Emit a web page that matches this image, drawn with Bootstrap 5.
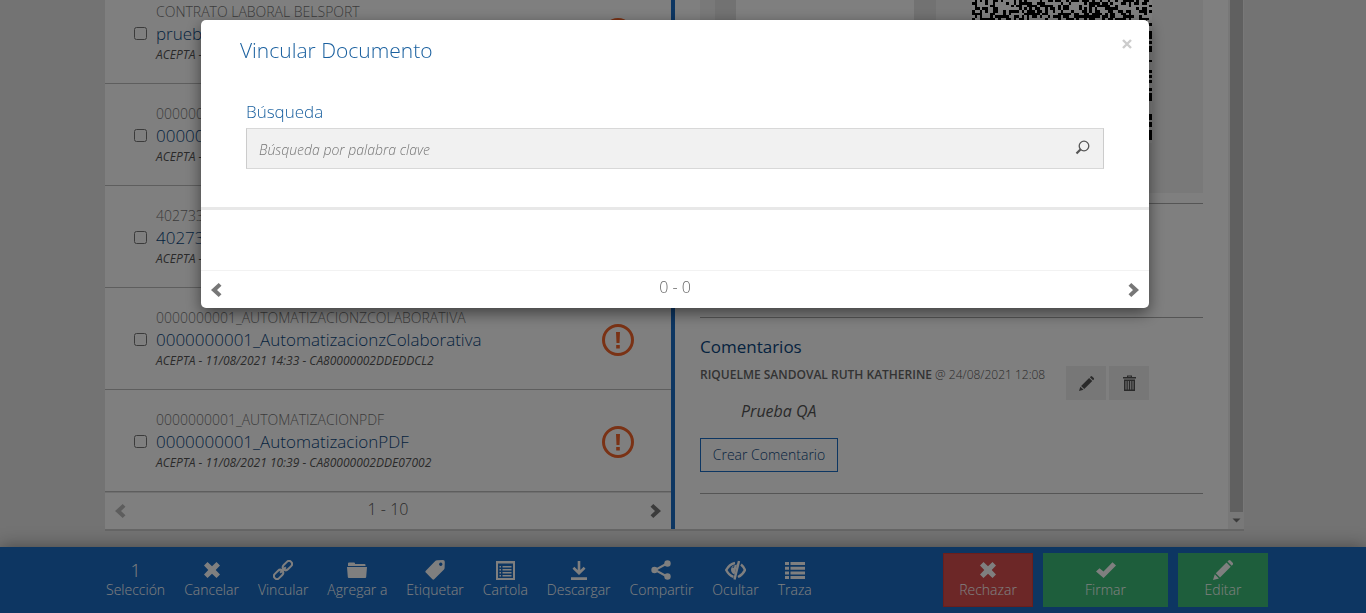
<!DOCTYPE html>
<html lang="es">
<head>
<meta charset="utf-8">
<meta name="viewport" content="width=device-width, initial-scale=1">
<title>Vincular Documento</title>
<link href="https://cdn.jsdelivr.net/npm/bootstrap@5.3.0/dist/css/bootstrap.min.css" rel="stylesheet">
<style>
:root{--brand:#1a6cc4;--ink-blue:#0b4680}
body{font-family:"Open Sans",sans-serif;font-weight:300;font-size:14px;line-height:20px;color:#555;background:#e6e6e6;height:100vh;overflow:hidden}
svg{display:block;fill:currentColor}
.desk{width:1139px;max-width:100%;box-shadow:0 2px 0 #ccc}
.desk-wrap{padding:0 17px 18px 0}
.inbox{width:570px;border-right:4px solid var(--brand)}
.stack{min-height:0}
.doc{height:102px;border-bottom:1px solid #bdbdbd;padding:2px 37px 0 29px;flex:none}
.doc input{width:13px;height:13px;margin:0 9px 0 0;accent-color:var(--brand)}
.doc-text{padding-bottom:2px}
.doc-kind{color:#777;line-height:20px}
.doc-name{font-size:17px;line-height:24px;color:var(--ink-blue);text-decoration:none}
.doc-meta{font-size:12px;line-height:18px;font-style:italic;font-weight:400;color:#555}
.alert-mark{color:#f4642a}
.pager{height:38px;font-size:16px;border-top:1px solid #e0e0e0}
.pager button{border:0;background:none;padding:0 9px;color:#777}
.pager button:disabled{color:#bbb}
.detail{padding:0 25px}
.files{background:#f2f2f2;height:238px;flex:none;padding-left:15px}
.viewer{width:221px;background:#e4e4e4;padding:0 22px 0 21px}
.sheet{background:#fff;height:100%}
.qr-box{padding:8px 36px}
.qr-box svg{background:#fff;color:#000}
.rule{height:1px;background:#aaa;flex:none}
.files-rule{margin-top:10px}
.folded{height:113px}
.detail-end{height:35px}
.notes-title{font-size:17px;line-height:24px;font-weight:400;color:var(--ink-blue);margin:17px 0 6px}
.author{font-size:12px;font-weight:300}
.author strong{font-weight:600;color:#666}
.note{font-size:16px;line-height:22px;font-style:italic;font-weight:400;padding:15px 0 0 41px}
.note-tools{gap:3px;margin-right:54px;padding-top:1px}
.btn-tool{width:40px;height:34px;background:#eee;border:0;border-radius:0;color:#555;padding:0}
.btn-note{width:138px;height:34px;border:1px solid var(--brand);border-radius:0;color:var(--ink-blue);font-size:14px;font-weight:300;padding:0 0 2px;margin:16px 0 21px}
.track{width:16px;background:#f1f1f1}
.thumb{background:#c1c1c1;margin:0 1px 0 2px}
.actions{height:66px;background:var(--brand);color:#fff;box-shadow:0 0 17px rgba(0,0,0,.4);flex:none}
.actions-in{width:1170px;max-width:100%;padding-left:8px}
.act{border:0;background:none;color:#fff;padding:0;font-size:14px;line-height:20px;font-weight:300}
.act-icon{height:20px;display:flex;align-items:center;justify-content:center}
.act-count{font-size:18px}
.tools{gap:19px}
.boxes{gap:10px}
.act-box{width:90px;height:54px}
.act-wide{width:125px}
.act-no{background:#d84f4f;border:1px solid #d43f3a}
.act-yes{background:#3cbd78}
.modal{padding-right:16px}
.modal-dialog{max-width:948px;margin:20px auto}
.modal-content{border:0;border-radius:5px;box-shadow:0 5px 15px rgba(0,0,0,.5);color:#666}
.modal-header{padding:16px 16px 0 39px;border:0;align-items:flex-start}
.modal-title{font-size:21px;line-height:29px;font-weight:300;color:#1a609f}
.x{border:0;background:none;padding:0;width:12px;height:16px;color:#ccc}
.modal-body{padding:35px 45px 38px;border-bottom:3px solid #e8e8e8}
.search-label{font-size:17px;line-height:24px;color:#1a609f;margin-bottom:4px}
.search-row{background:#f1f1f1;border:1px solid #ccc;border-color:#d8d8d8 #ccc;height:41px}
.search-row input{border:0;background:none;font-size:14px;font-weight:300;font-style:italic;outline:0;padding:2px 12px 0}
.search-row input::placeholder{color:#777;opacity:1}
.search-row button{border:0;background:none;color:#555;padding:0 13px 2px}
.results{height:60px}
.modal .pager{border-top:1px solid #f2f2f2}
.nudge{padding-bottom:5px}
</style>
</head>
<body class="d-flex flex-column">

<svg class="d-none">
  <symbol id="left" viewBox="0 0 12 16"><path d="M8.7 1 11.5 3.8 7 8l4.500 4.200L8.700 15 1 8z"/></symbol>
  <symbol id="right" viewBox="0 0 12 16"><path d="M3.300 1 .5 3.800 5 8 .5 12.200 3.300 15 11 8z"/></symbol>
  <symbol id="cross" viewBox="0 0 18 18"><path d="M4.500 1 9 5.300 13.500 1 17 4.500 12.700 9 17 13.500 13.500 17 9 12.700 4.500 17 1 13.500 5.300 9 1 4.500z"/></symbol>
  <symbol id="pencil" viewBox="0 0 20 20"><path d="m0 20 1.800-5.800 4.200 4.200zM2.800 13.200 13.500 2.500l4.200 4.200L7 17.400zM14.500 1.500 15.500.5q1-1 2 0l2.200 2.200q1 1 0 2l-1 1z"/></symbol>
  <symbol id="alert" viewBox="0 0 32 32"><circle cx="16" cy="16" r="14.500" fill="none" stroke="currentColor" stroke-width="3"/><path d="M14 8h4l-.5 11h-3zM14.200 21h3.600v3.500h-3.600z"/></symbol>
</svg>

<main class="desk-wrap flex-grow-1 d-flex justify-content-center stack">
  <div class="desk bg-white d-flex">
    <section class="inbox d-flex flex-column flex-shrink-0">
      <div class="stack flex-grow-1 overflow-hidden d-flex flex-column justify-content-end">
        <article class="doc d-flex align-items-center"><input type="checkbox" id="d1"><div class="doc-text flex-grow-1"><div class="doc-kind">CONTRATO LABORAL BELSPORT</div><label for="d1" class="doc-name d-block">prueb</label><div class="doc-meta">ACEPTA -</div></div><svg class="alert-mark" width="32" height="32"><use href="#alert"/></svg></article>
        <article class="doc d-flex align-items-center"><input type="checkbox" id="d2"><div class="doc-text flex-grow-1"><div class="doc-kind">000000</div><label for="d2" class="doc-name d-block">00000</label><div class="doc-meta">ACEPTA -</div></div></article>
        <article class="doc d-flex align-items-center"><input type="checkbox" id="d3"><div class="doc-text flex-grow-1"><div class="doc-kind">402733</div><label for="d3" class="doc-name d-block">40273</label><div class="doc-meta">ACEPTA -</div></div></article>
        <article class="doc d-flex align-items-center"><input type="checkbox" id="d4"><div class="doc-text flex-grow-1"><div class="doc-kind">0000000001_AUTOMATIZACIONZCOLABORATIVA</div><label for="d4" class="doc-name d-block">0000000001_AutomatizacionzColaborativa</label><div class="doc-meta">ACEPTA - 11/08/2021 14:33 - CA80000002DDEDDCL2</div></div><svg class="alert-mark" width="32" height="32"><use href="#alert"/></svg></article>
        <article class="doc d-flex align-items-center"><input type="checkbox" id="d5"><div class="doc-text flex-grow-1"><div class="doc-kind">0000000001_AUTOMATIZACIONPDF</div><label for="d5" class="doc-name d-block">0000000001_AutomatizacionPDF</label><div class="doc-meta">ACEPTA - 11/08/2021 10:39 - CA80000002DDE07002</div></div><svg class="alert-mark" width="32" height="32"><use href="#alert"/></svg></article>
      </div>
      <div class="pager d-flex align-items-center justify-content-between">
        <button type="button" disabled aria-label="Anterior"><svg width="12" height="16"><use href="#left"/></svg></button>
        <span class="nudge">1 - 10</span>
        <button type="button" aria-label="Siguiente"><svg width="12" height="16"><use href="#right"/></svg></button>
      </div>
    </section>

    <section class="detail stack flex-grow-1 d-flex flex-column justify-content-end overflow-hidden">
      <div class="files d-flex">
        <div class="viewer"><div class="sheet"></div></div>
        <div class="qr-box"><svg id="qr" width="180" height="180" viewBox="0 0 69 69" shape-rendering="crispEdges" role="img" aria-label="Código"><path/></svg></div>
      </div>
      <div class="rule files-rule"></div>
      <div class="folded flex-shrink-0"></div>
      <div class="rule"></div>
      <h2 class="notes-title">Comentarios</h2>
      <div class="d-flex">
        <div>
          <div class="author"><strong>RIQUELME SANDOVAL RUTH KATHERINE</strong> @ 24/08/2021 12:08</div>
          <div class="note">Prueba QA</div>
        </div>
        <div class="note-tools d-flex ms-auto">
          <button type="button" class="btn btn-tool d-flex align-items-center justify-content-center" aria-label="Editar comentario"><svg width="15" height="15"><use href="#pencil"/></svg></button>
          <button type="button" class="btn btn-tool d-flex align-items-center justify-content-center" aria-label="Borrar comentario"><svg width="13" height="16" viewBox="0 0 13 16"><path fill-rule="evenodd" d="M4 2V.500h5V2h4v1.500H0V2zM5.200 2h2.600v-.500H5.200zM1 4.500h11V16H1zM2.500 6v8.500h1V6zm2.300 0v8.500h1V6zm2.400 0v8.500h1V6zm2.300 0v8.500h1V6z"/></svg></button>
        </div>
      </div>
      <div><button type="button" class="btn btn-note">Crear Comentario</button></div>
      <div class="rule"></div>
      <div class="detail-end flex-shrink-0"></div>
    </section>

    <div class="track d-flex flex-column flex-shrink-0">
      <div class="thumb flex-grow-1"></div>
      <svg width="16" height="17" viewBox="0 0 16 17"><path fill="#777" d="M4.500 6.500h8l-4 4z"/></svg>
    </div>
  </div>
</main>

<footer class="actions d-flex justify-content-center">
  <div class="actions-in d-flex align-items-center justify-content-between">
    <div class="tools d-flex">
      <button type="button" class="act"><span class="act-icon act-count">1</span>Selección</button>
      <button type="button" class="act"><span class="act-icon"><svg width="18" height="18"><use href="#cross"/></svg></span>Cancelar</button>
      <button type="button" class="act"><span class="act-icon"><svg width="20" height="20" viewBox="0 0 20 20"><g transform="rotate(-45 10 10)" fill="none" stroke="currentColor" stroke-width="2"><rect x="-1.500" y="7" width="10.500" height="6" rx="3"/><rect x="11" y="7" width="10.500" height="6" rx="3"/><path d="M6 10h8"/></g></svg></span>Vincular</button>
      <button type="button" class="act"><span class="act-icon"><svg width="20" height="16" viewBox="0 0 20 16"><path d="M1 4V1.500Q1 .5 2 .5h5q1 0 1 1V2h9.500q1 0 1 1v1zM0 5h20l-.8 10q-.1 1-1 1H1.800q-.9 0-1-1z"/></svg></span>Agregar a</button>
      <button type="button" class="act"><span class="act-icon"><svg width="20" height="20" viewBox="0 0 20 20"><path fill-rule="evenodd" d="M10.500.8Q11 .3 12 .3L18 .1q1.800 0 1.800 1.800l-.2 6q0 .9-.6 1.500L9.200 19.200q-.9.900-1.800 0L.8 12.600q-.9-.9 0-1.800zM15.700 2.500a1.700 1.700 0 1 0 .1 0z"/></svg></span>Etiquetar</button>
      <button type="button" class="act"><span class="act-icon"><svg width="19" height="19" viewBox="0 0 19 19"><path fill-rule="evenodd" d="M0 0h19v19H0zM2 2.500V17h15V2.500zM3.500 5H5v1.500H3.500zM6.500 5h9v1.500h-9zM3.500 8H5v1.500H3.500zM6.500 8h9v1.500h-9zM3.500 11H5v1.500H3.500zM6.500 11h9v1.500h-9zM3.500 14H5v1.500H3.500zM6.500 14h9v1.500h-9z"/></svg></span>Cartola</button>
      <button type="button" class="act"><span class="act-icon"><svg width="16" height="19" viewBox="0 0 16 19"><path d="M6.700 0h2.600v9l3.400-3.200L14.500 7.700 8 14 1.500 7.700 3.300 5.800 6.700 9zM0 16.300h16V19H0z"/></svg></span>Descargar</button>
      <button type="button" class="act"><span class="act-icon"><svg width="20" height="20" viewBox="0 0 20 20"><path d="M16 3.500 4 10l12 6.500" fill="none" stroke="currentColor" stroke-width="2"/><circle cx="16.500" cy="3.500" r="3.200"/><circle cx="3.500" cy="10" r="3.200"/><circle cx="16.500" cy="16.500" r="3.200"/></svg></span>Compartir</button>
      <button type="button" class="act"><span class="act-icon"><svg width="21" height="20" viewBox="0 0 21 20"><path d="M10 3Q4.500 4 1.200 10 4 15.500 8.500 16.800M16 4.500q2.500 2 4 5.500-2.500 5-7 7M14 1 9.500 19.500" fill="none" stroke="currentColor" stroke-width="2.400"/><path d="M12 4.500 9.500 14.500Q6 13 6 9.500q0-4 6-5z"/><path d="M8 8q0-1.500 1.500-2" fill="none" stroke="#1a6cc4"/></svg></span>Ocultar</button>
      <button type="button" class="act"><span class="act-icon"><svg width="20" height="17" viewBox="0 0 20 17"><path d="M0 0h4v3H0zM5.500 0H20v3H5.500zM0 4.700h4v3H0zM5.500 4.700H20v3H5.500zM0 9.400h4v3H0zM5.500 9.400H20v3H5.500zM0 14h4v3H0zM5.500 14H20v3H5.500z"/></svg></span>Traza</button>
    </div>
    <div class="boxes d-flex">
      <button type="button" class="act act-box act-no"><span class="act-icon"><svg width="18" height="18"><use href="#cross"/></svg></span>Rechazar</button>
      <button type="button" class="act act-box act-wide act-yes"><span class="act-icon"><svg width="20" height="16" viewBox="0 0 20 16"><path d="m0 9.500 3.500-3.200 4 3.300L16.500.300 20 3.500 7.600 16z"/></svg></span>Firmar</button>
      <button type="button" class="act act-box act-yes"><span class="act-icon"><svg width="20" height="20"><use href="#pencil"/></svg></span>Editar</button>
    </div>
  </div>
</footer>

<div class="modal-backdrop show"></div>
<div class="modal d-block" role="dialog" aria-labelledby="t">
  <div class="modal-dialog">
    <div class="modal-content">
      <div class="modal-header">
        <h1 class="modal-title" id="t">Vincular Documento</h1>
        <button type="button" class="x" aria-label="Cerrar"><svg width="12" height="16" viewBox="0 0 12 16"><path d="m2 4 8 8M10 4l-8 8" stroke="currentColor" stroke-width="2.400"/></svg></button>
      </div>
      <div class="modal-body">
        <label class="search-label d-block" for="q">Búsqueda</label>
        <div class="search-row d-flex align-items-stretch">
          <input class="flex-grow-1" id="q" type="text" placeholder="Búsqueda por palabra clave">
          <button type="button" aria-label="Buscar"><svg width="15" height="15" viewBox="0 0 15 15"><circle cx="9" cy="6" r="4.800" fill="none" stroke="currentColor" stroke-width="1.300"/><path d="M5.700 9.300 1.500 13.500" stroke="currentColor" stroke-width="2.200"/></svg></button>
        </div>
      </div>
      <div class="results"></div>
      <div class="pager d-flex align-items-center justify-content-between">
        <button type="button" aria-label="Anterior"><svg width="12" height="16"><use href="#left"/></svg></button>
        <span class="nudge">0 - 0</span>
        <button type="button" aria-label="Siguiente"><svg width="12" height="16"><use href="#right"/></svg></button>
      </div>
    </div>
  </div>
</div>

<script src="https://cdn.jsdelivr.net/npm/bootstrap@5.3.0/dist/js/bootstrap.bundle.min.js"></script>
<script>
// fills the code symbol with its dark modules
let seed = 7, d = '';
for (let y = 0; y < 69; y++) for (let x = 0; x < 69; x++) {
  seed = (seed * 1103515 + 12345) % 2147483648;
  if (seed / 2147483648 < .54) d += `M${x} ${y}h1v1h-1z`;
}
document.querySelector('#qr path').setAttribute('d', d);
</script>
</body>
</html>
